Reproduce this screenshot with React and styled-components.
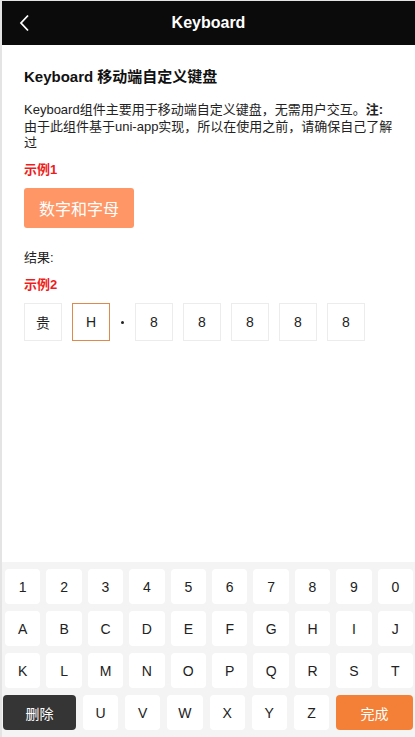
import React from "react"
import styled, { createGlobalStyle } from "styled-components"

const GlobalStyle = createGlobalStyle`
  html, body {
    margin: 0;
    padding: 0;
    background: #fff;
  }
  body {
    font-family: "Liberation Sans", Arial, "Noto Sans CJK SC", sans-serif;
    color: #333;
  }
`

const Page = styled.div`
  display: flex;
  flex-direction: column;
  min-height: 100vh;
  box-sizing: border-box;
  border-left: 2px solid #e4e4e4;
  border-top: 1px solid #e4e4e4;
  background: #fff;
`

const NavBar = styled.header`
  position: relative;
  display: flex;
  align-items: center;
  justify-content: center;
  height: 44px;
  background: #0b0b0b;
  color: #fff;
`

const BackButton = styled.button`
  position: absolute;
  left: 12px;
  top: 11px;
  width: 20px;
  height: 22px;
  padding: 0;
  border: 0;
  background: none;
  display: flex;
  align-items: center;
  justify-content: center;
`

const NavTitle = styled.h1`
  margin: 0;
  font-size: 16px;
  font-weight: bold;
`

const Content = styled.main`
  padding: 22px 15px 0 22px;
`

const Title = styled.h2`
  margin: 0 0 15px;
  font-size: 15px;
  line-height: 20px;
  font-weight: bold;
  color: #111;
`

const Desc = styled.p`
  margin: 0;
  font-size: 13px;
  line-height: 16.7px;
  color: #222;
  b {
    font-weight: bold;
  }
`

const Label = styled.div`
  margin-top: ${(p) => p.top || 12}px;
  font-size: 13px;
  line-height: 18px;
  font-weight: bold;
  color: #ee1c1c;
`

const ShowButton = styled.button`
  margin-top: 9px;
  height: 40px;
  padding: 0 15px;
  border: 0;
  border-radius: 3px;
  background: #ff9666;
  color: #fff;
  font-family: inherit;
  font-size: 16px;
`

const Result = styled.div`
  margin-top: 21px;
  font-size: 13px;
  line-height: 18px;
  color: #222;
`

const Plates = styled.div`
  display: flex;
  align-items: center;
  gap: 10px;
  margin-top: 9px;
`

const Plate = styled.div`
  width: 38px;
  height: 38px;
  box-sizing: border-box;
  display: flex;
  align-items: center;
  justify-content: center;
  border: 1px solid ${(p) => (p.active ? "#e0894c" : "#ececec")};
  font-size: 14px;
  color: #222;
`

const Dot = styled.span`
  width: 3px;
  height: 3px;
  margin: 0 1px;
  border-radius: 50%;
  background: #222;
`

const Keyboard = styled.section`
  margin-top: auto;
  background: #f4f4f4;
  padding: 7px 0;
  display: flex;
  flex-direction: column;
  gap: 7px;
`

const KeyRow = styled.div`
  display: grid;
  grid-template-columns: repeat(10, 1fr);
  gap: 6px;
  padding: 0 2px 0 3px;
`

const LastRow = styled.div`
  display: grid;
  grid-template-columns: 73px repeat(6, 1fr) 77px;
  gap: 7px;
  padding: 0 2px 0 1px;
`

const Key = styled.button`
  height: 35px;
  padding: 0;
  border: 0;
  border-radius: 4px;
  background: ${(p) => p.bg || "#fff"};
  color: ${(p) => p.fg || "#222"};
  font-family: inherit;
  font-size: 14px;
`

const rows = [
  "1234567890".split(""),
  "ABCDEFGHIJ".split(""),
  "KLMNOPQRST".split(""),
]

const plate = ["贵", "H", "8", "8", "8", "8", "8"]

export default function App() {
  return (
    <>
      <GlobalStyle />
      <Page>
        <NavBar>
          <BackButton aria-label="back">
            <svg width="12" height="18" viewBox="0 0 12 18">
              <path d="M10 1.5 L3 9 L10 16.5" fill="none" stroke="#fff" strokeWidth="1.8" />
            </svg>
          </BackButton>
          <NavTitle>Keyboard</NavTitle>
        </NavBar>
        <Content>
          <Title>Keyboard 移动端自定义键盘</Title>
          <Desc>
            Keyboard组件主要用于移动端自定义键盘，无需用户交互。<b>注:</b>
            <br />
            由于此组件基于uni-app实现，所以在使用之前，请确保自己了解过
          </Desc>
          <Label top={9}>示例1</Label>
          <ShowButton>数字和字母</ShowButton>
          <Result>结果:</Result>
          <Label top={9}>示例2</Label>
          <Plates>
            <Plate>{plate[0]}</Plate>
            <Plate active>{plate[1]}</Plate>
            <Dot />
            {plate.slice(2).map((c, i) => (
              <Plate key={i}>{c}</Plate>
            ))}
          </Plates>
        </Content>
        <Keyboard>
          {rows.map((row, i) => (
            <KeyRow key={i}>
              {row.map((k) => (
                <Key key={k}>{k}</Key>
              ))}
            </KeyRow>
          ))}
          <LastRow>
            <Key bg="#353535" fg="#fff">删除</Key>
            {"UVWXYZ".split("").map((k) => (
              <Key key={k}>{k}</Key>
            ))}
            <Key bg="#f47f37" fg="#fff">完成</Key>
          </LastRow>
        </Keyboard>
      </Page>
    </>
  )
}
